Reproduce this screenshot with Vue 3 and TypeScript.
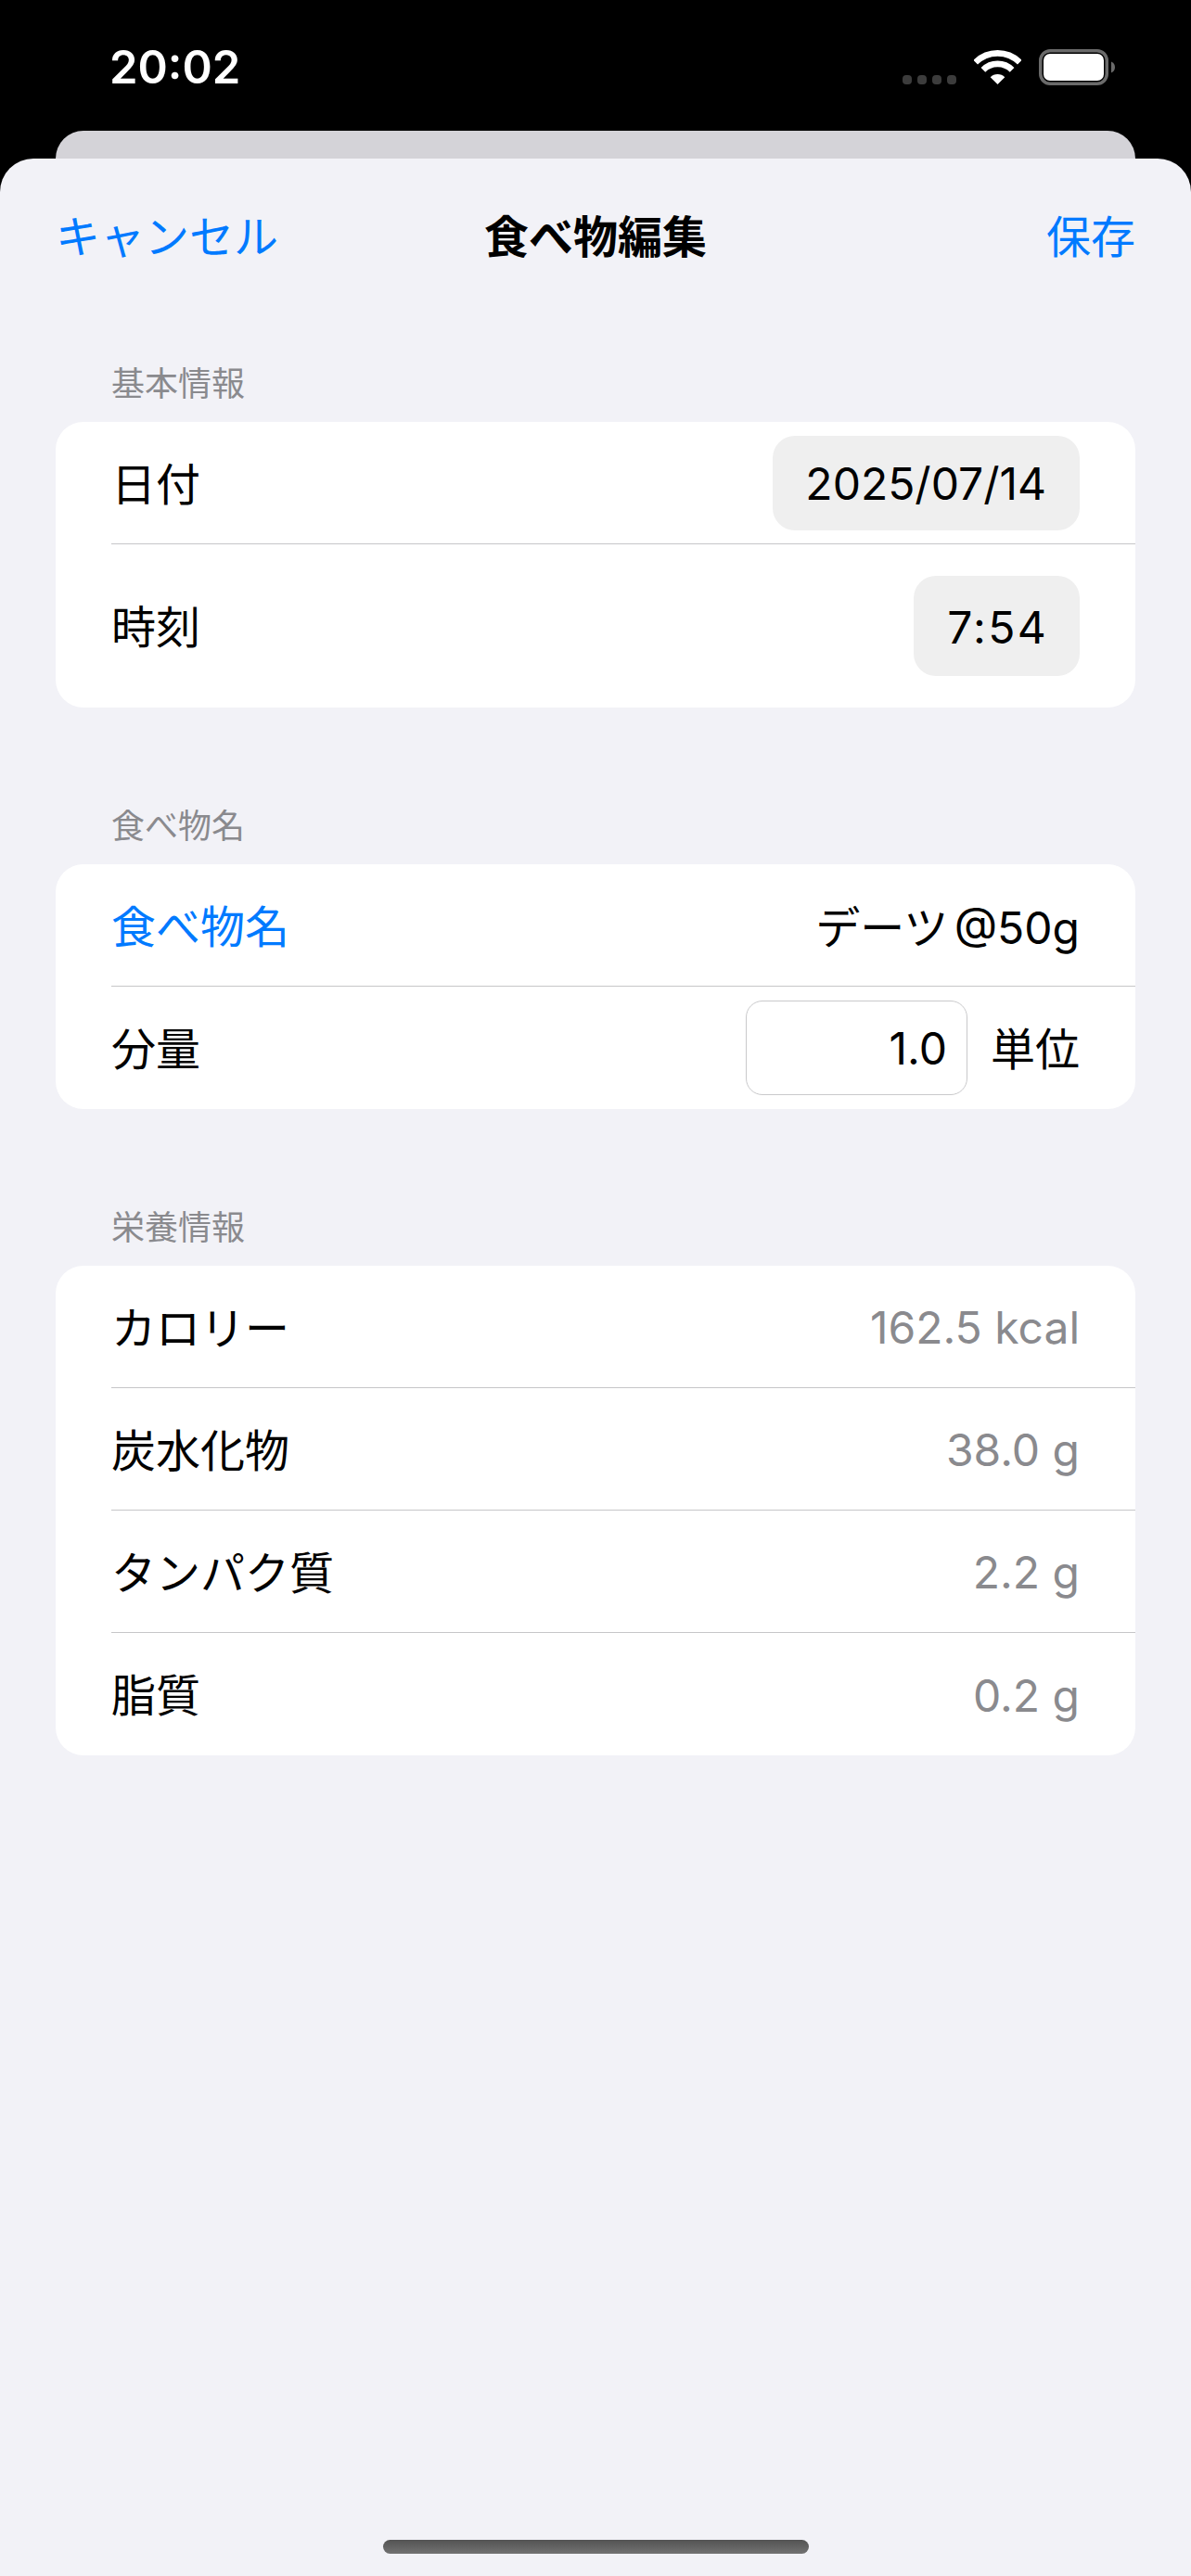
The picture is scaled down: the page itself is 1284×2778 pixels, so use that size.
<script setup lang="ts">
interface NutritionRow {
  label: string
  value: string
}

const nutrition: NutritionRow[] = [
  { label: 'カロリー', value: '162.5 kcal' },
  { label: '炭水化物', value: '38.0 g' },
  { label: 'タンパク質', value: '2.2 g' },
  { label: '脂質', value: '0.2 g' },
]
</script>

<template>
  <div class="screen">
    <header class="status">
      <span class="time">20:02</span>
      <div class="status-icons">
        <div class="signal">
          <i></i><i></i><i></i><i></i>
        </div>
        <svg class="wifi" width="51" height="37" viewBox="0 0 51 37">
          <path d="M1.7 13.2A33.7 33.7 0 0 1 49.3 13.2" fill="none" stroke="#fff" stroke-width="6.6" />
          <path d="M9.9 21.4A22 22 0 0 1 41.1 21.4" fill="none" stroke="#fff" stroke-width="6.6" />
          <path d="M25.5 37L17.7 29.2A11 11 0 0 1 33.3 29.2Z" fill="#fff" />
        </svg>
        <svg class="battery" width="82" height="39" viewBox="0 0 82 39">
          <rect x="1.75" y="1.75" width="71.5" height="35.5" rx="10.5" fill="none" stroke="#6a6a6a" stroke-width="3.5" />
          <rect x="5" y="5" width="65" height="29" rx="7" fill="#fff" />
          <path d="M78 13.5C80.5 14.5 82 16.8 82 19.5C82 22.2 80.5 24.5 78 25.5Z" fill="#6a6a6a" />
        </svg>
      </div>
    </header>

    <div class="back-card"></div>

    <main class="sheet">
      <nav class="nav">
        <span class="nav-action">キャンセル</span>
        <span class="nav-title">食べ物編集</span>
        <span class="nav-action nav-end">保存</span>
      </nav>

      <section class="section">
        <h2 class="section-title">基本情報</h2>
        <div class="card">
          <div class="row">
            <span class="label">日付</span>
            <span class="pill pill-date">2025/07/14</span>
          </div>
          <div class="row row-tall">
            <span class="label">時刻</span>
            <span class="pill pill-time">7:54</span>
          </div>
        </div>
      </section>

      <section class="section">
        <h2 class="section-title">食べ物名</h2>
        <div class="card">
          <div class="row">
            <span class="label link">食べ物名</span>
            <span class="food">デーツ @50g</span>
          </div>
          <div class="row">
            <span class="label">分量</span>
            <div class="quantity">
              <span class="field">1.0</span>
              <span class="label">単位</span>
            </div>
          </div>
        </div>
      </section>

      <section class="section">
        <h2 class="section-title">栄養情報</h2>
        <div class="card">
          <div v-for="item in nutrition" :key="item.label" class="row">
            <span class="label">{{ item.label }}</span>
            <span class="muted">{{ item.value }}</span>
          </div>
        </div>
      </section>

      <div class="home-indicator"></div>
    </main>
  </div>
</template>

<style scoped>
.screen {
  width: 1284px;
  height: 2778px;
  display: flex;
  flex-direction: column;
  background: #000;
  font-family: Inter, "Noto Sans CJK JP", sans-serif;
  font-size: 48px;
  color: #000;
  overflow: hidden;
}

.status {
  height: 141px;
  flex: none;
  display: flex;
  justify-content: space-between;
  align-items: flex-start;
  padding: 43px 82px 0 118px;
  box-sizing: border-box;
}

.time {
  font-size: 49px;
  line-height: 60px;
  font-weight: 600;
  color: #fff;
}

.status-icons {
  display: flex;
  align-items: flex-end;
  margin-top: 10px;
}

.signal {
  display: flex;
  gap: 6px;
  margin-right: 19px;
  margin-bottom: 1px;
}

.signal i {
  display: block;
  width: 10px;
  height: 10px;
  border-radius: 4px;
  background: #3c3c3c;
}

.wifi {
  display: block;
  margin-right: 19px;
  margin-bottom: 1px;
}

.battery {
  display: block;
}

.back-card {
  height: 30px;
  flex: none;
  margin: 0 60px;
  border-radius: 30px 30px 0 0;
  background: #d4d3d8;
}

.sheet {
  flex: 1;
  display: flex;
  flex-direction: column;
  padding: 0 60px;
  border-radius: 36px 36px 0 0;
  background: #f2f2f7;
}

.nav {
  height: 168px;
  flex: none;
  display: grid;
  grid-template-columns: 1fr auto 1fr;
  align-items: center;
  padding-top: 2px;
  box-sizing: border-box;
  margin-bottom: -53px;
}

.nav-action {
  color: #007aff;
  line-height: 60px;
}

.nav-end {
  justify-self: end;
}

.nav-title {
  font-weight: 700;
  line-height: 60px;
}

.section {
  margin-top: 85px;
}

.section-title {
  margin: 0;
  padding: 1px 0 0 60px;
  box-sizing: border-box;
  height: 84px;
  font-size: 36px;
  font-weight: 400;
  line-height: 84px;
  color: #8a8a8e;
}

.card {
  border-radius: 30px;
  background: #fff;
  overflow: hidden;
}

.row {
  height: 132px;
  margin-left: 60px;
  padding-right: 60px;
  box-sizing: border-box;
  display: flex;
  justify-content: space-between;
  align-items: center;
  border-bottom: 1px solid #c6c6c8;
}

.row:last-child {
  border-bottom: none;
}

.row-tall {
  height: 176px;
}

.label {
  padding-bottom: 4px;
}

.pill {
  display: flex;
  align-items: center;
  justify-content: flex-end;
  padding: 2px 36px 0 0;
  box-sizing: border-box;
  border-radius: 24px;
  background: #efefef;
}

.pill-date {
  width: 331px;
  height: 102px;
}

.pill-time {
  width: 179px;
  height: 108px;
  padding-right: 34px;
  letter-spacing: 2.3px;
}

.link {
  color: #007aff;
}

.food {
  padding-bottom: 2px;
  word-spacing: -7px;
}

.muted {
  padding-top: 2px;
  color: #8a8a8e;
}

.quantity {
  display: flex;
  align-items: center;
  gap: 25px;
}

.field {
  width: 239px;
  height: 102px;
  box-sizing: border-box;
  display: flex;
  align-items: center;
  justify-content: flex-end;
  padding-right: 21px;
  border: 1.5px solid #c9c9cb;
  border-radius: 18px;
  background: #fff;
}

.home-indicator {
  width: 459px;
  height: 15px;
  margin: auto auto 24px;
  border-radius: 8px;
  background: linear-gradient(#535353, #727272);
}
</style>

<style>
html,
body {
  background: #000;
}
</style>
